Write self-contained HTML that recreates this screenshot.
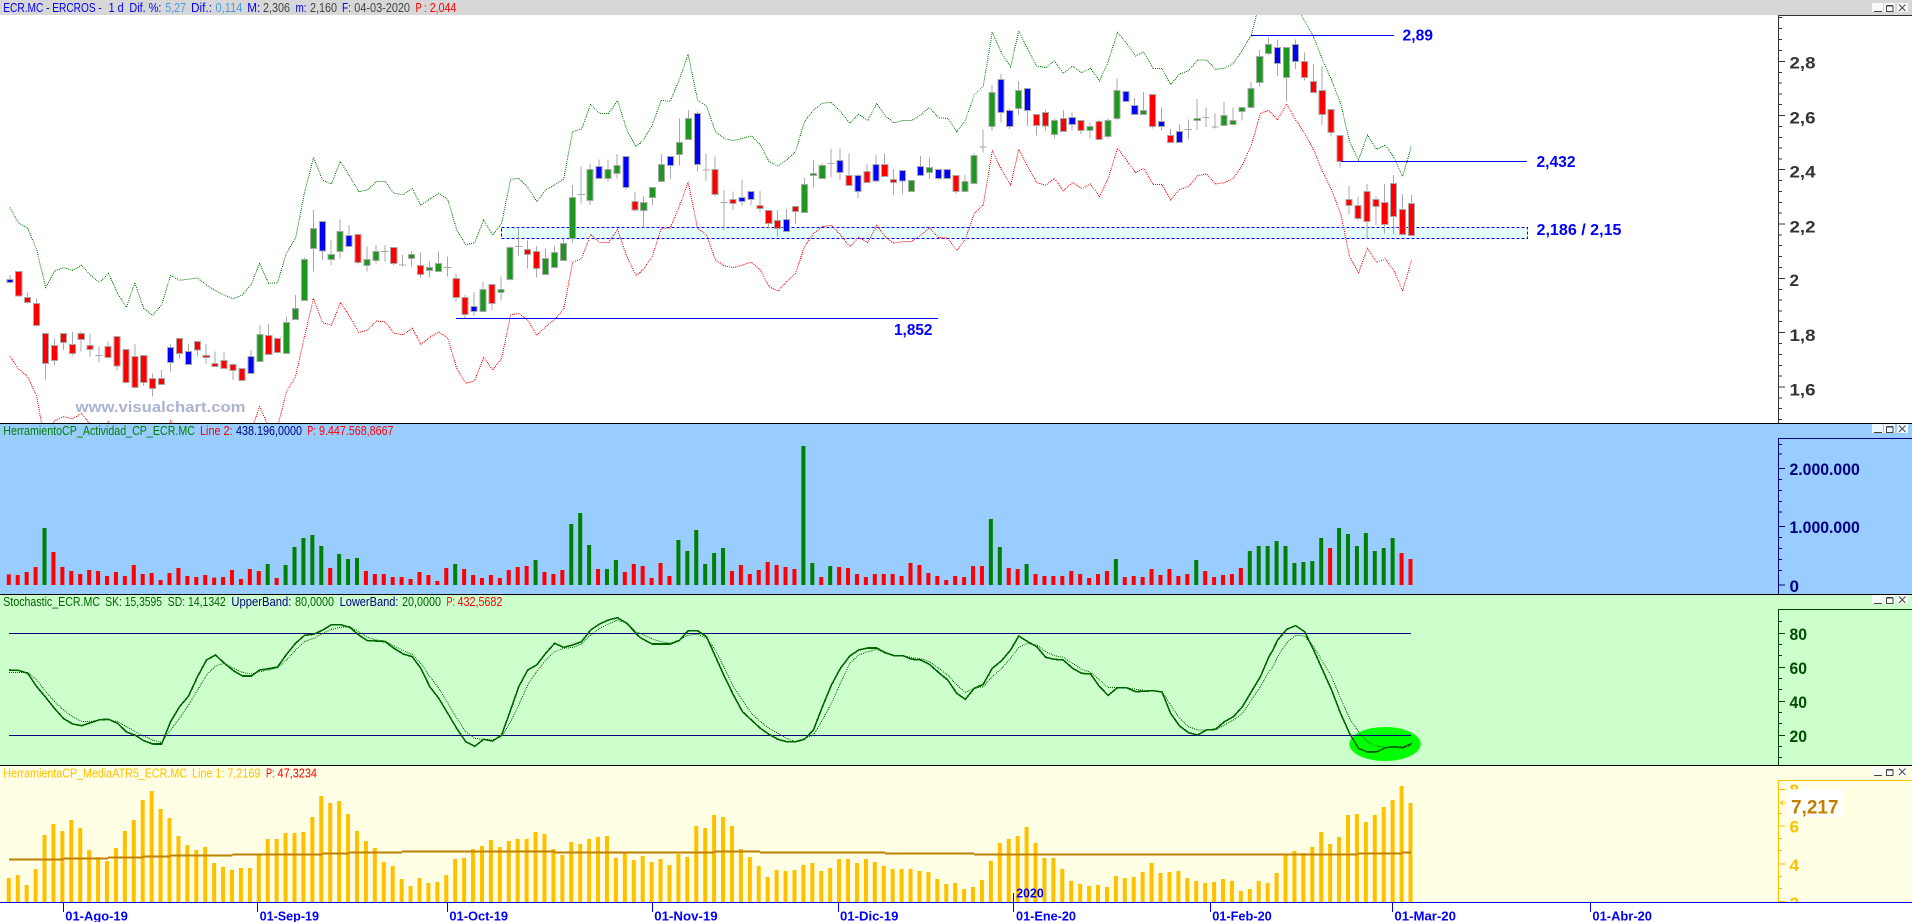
<!DOCTYPE html>
<html><head><meta charset="utf-8"><title>ECR.MC - ERCROS</title>
<style>
html,body{margin:0;padding:0;background:#fff;overflow:hidden}
svg{display:block}
text{font-family:"Liberation Sans",sans-serif}
.v{vector-effect:non-scaling-stroke;fill:none}
.c{shape-rendering:crispEdges}
.b{font-weight:bold}
.t{font-size:12.5px}
</style></head><body>
<svg width="1912" height="922" viewBox="0 0 1912 922" xmlns="http://www.w3.org/2000/svg">
<defs>
<g id="btn">
<rect x="0" y="0" width="11" height="9" fill="#fff" fill-opacity=".85"/>
<rect x="12" y="0" width="11" height="9" fill="#fff" fill-opacity=".85"/>
<rect x="25" y="0" width="11" height="9" fill="#fff" fill-opacity=".85"/>
<path d="M2 8.5h8" stroke="#444" fill="none" class="c"/>
<path d="M14.5 3h6.5v5.5h-6.5zM14.5 2.5h6.5" stroke="#444" fill="none" class="c"/>
<path d="M27 1.5l6.5 6.5M33.5 1.5l-6.5 6.5" stroke="#444" fill="none"/>
</g>
</defs>
<rect width="1912" height="922" fill="#fff"/>

<!-- support/resistance zone -->
<rect x="501.5" y="227.5" width="1026" height="11" fill="#e5fdfd" stroke="#0000ff" stroke-dasharray="3 2" class="c"/>

<!-- wicks -->
<g transform="translate(9.8 0) scale(8.928 .33333)" class="c"><path class="v" stroke="#a8a8a8" stroke-width="1" d="M0 825V850M2 877V910M3 895V980M4 1000V1138M5 1015V1095M6 1000V1050M7 996V1067M8 996V1055M9 1000V1070M10 1040V1088M11 1025V1075M12 1010V1112M13 1048V1150M14 1032V1165M15 1066V1157M16 1120V1190M17 1110V1155M18 1033V1115M19 1015V1075M20 1030V1095M21 1024V1070M22 1032V1090M23 1055V1100M24 1058V1105M25 1090V1140M26 1105V1141M27 1050V1120M28 975V1085M29 972V1065M30 1015V1060M31 950V1060M32 885V960M33 772V902M34 630V815M35 664V782M36 720V795M37 658V775M38 675V740M39 703V793M40 740V815M41 735V790M42 735V785M43 742V795M44 765V800M45 755V800M46 758V833M47 785V833M48 755V815M49 770V830M50 820V905M51 885V955M52 876V948M53 846V935M54 853V930M55 830V902M56 740V842M57 682V768M58 722V805M59 738V833M60 745V825M61 738V802M62 716V782M63 555V728M64 500V610M65 492V615M66 478V535M67 478V545M68 462V535M69 468V568M70 575V635M71 590V682M72 562V615M73 462V545M74 469V537M75 355V497M76 330V418M77 334V515M78 460V543M79 470V590M80 570V692M81 575V630M82 540V617M83 575V617M84 573V638M85 630V685M86 630V710M87 628V695M88 620V672M89 534V638M90 480V563M91 490V535M92 447V533M93 445V540M94 460V557M95 522V594M96 492V548M97 465V548M98 460V530M99 507V585M100 512V582M101 540V575M102 468V527M103 472V537M104 508V540M105 508V537M106 527V582M107 525V575M108 460V552M109 388V458M110 255V392M111 222V368M112 325V387M113 243V345M114 265V378M115 343V407M116 330V392M117 355V416M118 330V395M119 338V392M120 360V402M121 368V415M122 358V418M123 355V415M124 235V362M125 272V305M126 294V345M127 276V343M128 283V386M129 322V391M130 385V427M131 373V427M132 358V417M133 297V390M134 322V381M135 340V385M136 306V377M137 322V374M138 322V362M139 246V323M140 150V260M141 113V165M142 118V228M143 142V305M144 118V207M145 158V242M146 192V277M147 198V375M148 328V410M149 405V503M150 558V642M151 590V662M152 552V715M153 590V675M154 552V700M155 525V702M156 582V705M157 585V708"/>
<path class="v" stroke="#a8a8a8" stroke-width="1" d="M9.6 1067h.8M41.6 755h.8M43.6 795h.8M48.6 803h.8M56.6 739h.8M63.6 583h.8M77.6 510h.8M79.6 607h.8M91.6 491h.8M108.6 441h.8M131.6 388h.8M133.6 352h.8M134.6 381h.8"/>
</g>
<!-- bodies -->
<g transform="translate(6.8 0) scale(8.928 .33333)" class="c" stroke="#a8a8a8" stroke-width="1">
<path class="v" style="fill:#ff0000" d="M1 815h.68V888h-.68zM2 893h.68V907h-.68zM3 910h.68V976h-.68zM4 1000h.68V1090h-.68zM5 1037h.68V1081h-.68zM6 1000h.68V1027h-.68zM7 1033h.68V1060h-.68zM8 1000h.68V1018h-.68zM9 1036h.68V1048h-.68zM11 1040h.68V1072h-.68zM12 1010h.68V1098h-.68zM13 1048h.68V1147h-.68zM14 1070h.68V1162h-.68zM15 1067h.68V1147h-.68zM16 1135h.68V1165h-.68zM17 1135h.68V1153h-.68zM19 1015h.68V1060h-.68zM21 1024h.68V1050h-.68zM22 1066h.68V1073h-.68zM23 1090h.68V1099h-.68zM24 1081h.68V1105h-.68zM25 1093h.68V1111h-.68zM26 1106h.68V1141h-.68zM29 1006h.68V1063h-.68zM30 1015h.68V1057h-.68zM39 703h.68V787h-.68zM43 742h.68V790h-.68zM46 797h.68V823h-.68zM50 835h.68V892h-.68zM51 892h.68V943h-.68zM54 853h.68V910h-.68zM58 748h.68V764h-.68zM59 755h.68V805h-.68zM70 604h.68V630h-.68zM79 508h.68V583h-.68zM81 598h.68V610h-.68zM84 616h.68V626h-.68zM85 631h.68V670h-.68zM86 661h.68V686h-.68zM88 620h.68V634h-.68zM94 526h.68V556h-.68zM96 515h.68V547h-.68zM98 493h.68V529h-.68zM99 538h.68V547h-.68zM106 527h.68V574h-.68zM115 343h.68V376h-.68zM116 338h.68V378h-.68zM118 355h.68V394h-.68zM120 362h.68V391h-.68zM122 364h.68V418h-.68zM128 283h.68V379h-.68zM130 406h.68V427h-.68zM145 184h.68V232h-.68zM146 244h.68V277h-.68zM147 271h.68V343h-.68zM148 328h.68V397h-.68zM149 406h.68V484h-.68zM150 598h.68V616h-.68zM151 616h.68V655h-.68zM152 574h.68V664h-.68zM153 598h.68V619h-.68zM154 607h.68V673h-.68zM155 550h.68V649h-.68zM156 628h.68V703h-.68zM157 610h.68V706h-.68z"/>
<path class="v" style="fill:#1f961f" d="M28 1003h.68V1085h-.68zM31 968h.68V1060h-.68zM32 925h.68V958h-.68zM33 778h.68V902h-.68zM34 685h.68V745h-.68zM36 763h.68V778h-.68zM37 695h.68V754h-.68zM40 778h.68V796h-.68zM41 754h.68V781h-.68zM45 763h.68V775h-.68zM47 802h.68V811h-.68zM48 790h.68V814h-.68zM53 868h.68V934h-.68zM55 868h.68V878h-.68zM56 742h.68V838h-.68zM60 775h.68V823h-.68zM61 757h.68V802h-.68zM62 730h.68V782h-.68zM63 592h.68V716h-.68zM65 508h.68V601h-.68zM67 508h.68V535h-.68zM68 496h.68V520h-.68zM71 607h.68V631h-.68zM72 562h.68V592h-.68zM73 493h.68V544h-.68zM75 427h.68V463h-.68zM76 355h.68V418h-.68zM89 553h.68V637h-.68zM90 520h.68V527h-.68zM91 496h.68V535h-.68zM101 541h.68V574h-.68zM103 502h.68V517h-.68zM107 544h.68V574h-.68zM108 466h.68V550h-.68zM110 278h.68V380h-.68zM113 271h.68V325h-.68zM117 361h.68V403h-.68zM121 379h.68V391h-.68zM123 361h.68V409h-.68zM124 271h.68V355h-.68zM127 331h.68V343h-.68zM133 355h.68V361h-.68zM136 346h.68V376h-.68zM137 361h.68V373h-.68zM138 322h.68V334h-.68zM139 265h.68V322h-.68zM140 170h.68V247h-.68zM141 133h.68V160h-.68zM143 143h.68V232h-.68z"/>
<path class="v" style="fill:#0000ff" d="M0 838h.68V848h-.68zM18 1043h.68V1087h-.68zM20 1055h.68V1093h-.68zM27 1070h.68V1120h-.68zM35 664h.68V753h-.68zM38 707h.68V739h-.68zM52 919h.68V935h-.68zM66 500h.68V535h-.68zM69 469h.68V562h-.68zM74 469h.68V496h-.68zM77 340h.68V493h-.68zM82 593h.68V604h-.68zM83 575h.68V598h-.68zM87 658h.68V694h-.68zM93 482h.68V517h-.68zM95 526h.68V574h-.68zM97 493h.68V543h-.68zM100 512h.68V543h-.68zM102 500h.68V526h-.68zM104 508h.68V535h-.68zM105 508h.68V535h-.68zM111 238h.68V337h-.68zM112 331h.68V379h-.68zM114 265h.68V331h-.68zM119 353h.68V373h-.68zM125 274h.68V304h-.68zM126 316h.68V343h-.68zM129 364h.68V379h-.68zM131 394h.68V427h-.68zM142 143h.68V190h-.68zM144 134h.68V184h-.68z"/>
</g>

<!-- watermark -->
<text x="75.5" y="412" class="b" font-size="15" fill="#adb1d4" textLength="170" lengthAdjust="spacingAndGlyphs">www.visualchart.com</text>

<!-- upper / lower bands -->
<g stroke-width="1" stroke-dasharray="1 1" class="c">
<g transform="scale(.40816 .33333)">
<polyline class="v" stroke="#008000" points="24,622 45,668 68,685 90,750 112,863 134,813 156,803 178,811 200,796 222,826 244,848 266,820 288,880 310,922 330,848 352,925 374,946 396,915 418,826 440,841 484,834 506,855 528,872 550,886 572,896 594,885 616,852 636,790 658,850 680,848 702,758 724,715 746,578 768,472 790,540 812,552 834,484 857,530 879,575 900,570 922,545 944,545 965,580 988,584 1010,565 1031,616 1053,597 1075,580 1097,598 1119,690 1141,734 1163,728 1185,660 1207,705 1229,670 1251,538 1271,535 1293,562 1315,605 1337,570 1359,555 1381,537 1403,395 1425,387 1447,313 1469,340 1491,340 1513,302 1536,390 1558,440 1568,430"/>
<polyline class="v" stroke="#ff0000" points="24,1068 45,1107 68,1130 90,1190 102,1270 112,1310 134,1262 156,1250 178,1256 200,1240 222,1275 244,1296 266,1265 288,1330 310,1370 330,1296 352,1370 374,1390 396,1360 418,1262 440,1290 484,1285 506,1305 528,1322 550,1335 572,1345 594,1335 616,1290 636,1220 658,1280 680,1280 702,1175 724,1130 746,1010 768,895 790,968 812,976 834,907 857,950 879,997 900,990 922,963 944,966 965,1000 988,1004 1010,985 1031,1033 1053,1012 1075,996 1097,1015 1119,1105 1141,1150 1163,1142 1185,1072 1207,1110 1229,1075 1251,945 1271,940 1293,960 1315,1006 1337,980 1359,958 1381,928 1403,787 1425,776 1447,703 1469,728 1491,728 1513,688 1536,770 1558,826 1568,818"/>
</g>
<g transform="translate(640 0) scale(.40816 .33333)">
<polyline class="v" stroke="#008000" points="0,430 8,420 30,375 52,301 74,304 96,240 118,163 141,300 163,318 185,395 207,416 229,422 251,415 273,408 295,435 316,485 338,498 359,480 381,455 403,365 425,330 447,310 469,307 491,335 514,370 536,343 558,362 580,310 601,348 622,368 644,361 666,361 688,345 709,322 732,354 754,355 776,395 797,362 819,285 841,258 863,96 886,160 908,200 928,93 950,148 972,198 994,203 1015,183 1037,220 1060,198 1082,218 1104,205 1126,243 1147,185 1170,97 1192,130 1214,168 1234,156 1257,205 1279,205 1300,254 1322,222 1344,212 1366,180 1388,180 1410,208 1432,205 1454,190 1476,150 1498,105 1510,45 1520,0"/>
<polyline class="v" stroke="#ff0000" points="0,818 8,808 30,770 52,685 74,684 96,620 118,547 141,685 163,705 185,780 207,797 229,803 251,795 273,787 295,810 316,860 338,873 359,845 381,820 403,740 425,700 447,680 469,676 491,705 514,740 536,712 558,728 580,676 601,710 622,730 644,725 666,724 688,705 709,684 732,713 754,714 776,752 797,718 819,640 841,615 863,453 886,510 908,555 928,448 950,500 972,548 994,556 1015,535 1037,572 1060,547 1082,566 1104,552 1126,590 1147,535 1170,445 1192,480 1214,518 1234,505 1257,553 1279,553 1300,600 1322,568 1344,560 1366,527 1388,522 1410,552 1432,548 1454,535 1476,495 1498,435 1520,340 1541,331 1562,360"/>
</g>
<g transform="translate(1272 0) scale(.40816 .33333)">
<polyline class="v" stroke="#008000" points="50,0 72,45 100,105 124,180 146,240 168,310 190,425 212,480 234,405 256,448 278,435 300,475 320,530 342,436"/>
<polyline class="v" stroke="#ff0000" points="14,358 36,312 58,360 80,400 102,450 124,515 146,570 168,640 190,770 212,818 234,745 256,787 278,777 300,815 320,873 342,780"/>
</g>
</g>

<!-- price horizontals -->
<path d="M1251 35.5H1394M1341 161.5H1527M456 318.5H938" stroke="#0000ff" fill="none" class="c"/>
<g class="b" fill="#0000ff" font-size="15.5">
<text x="1402.5" y="40.5" textLength="30.5" lengthAdjust="spacingAndGlyphs">2,89</text>
<text x="1536.5" y="167" textLength="39" lengthAdjust="spacingAndGlyphs">2,432</text>
<text x="1536.5" y="235" textLength="85" lengthAdjust="spacingAndGlyphs">2,186 / 2,15</text>
<text x="894" y="335" textLength="38.5" lengthAdjust="spacingAndGlyphs">1,852</text>
</g>

<!-- title bar -->
<rect x="0" y="0" width="1912" height="15" fill="#d7d7d7"/>
<g class="t">
<text x="3.3" y="12" fill="#0000ff" textLength="98.5" lengthAdjust="spacingAndGlyphs">ECR.MC - ERCROS -</text>
<text x="108.6" y="12" fill="#0000ff" textLength="15" lengthAdjust="spacingAndGlyphs">1 d</text>
<text x="129.4" y="12" fill="#0000ff" textLength="32" lengthAdjust="spacingAndGlyphs">Dif. %:</text>
<text x="165.3" y="12" fill="#4a9be6" textLength="20.7" lengthAdjust="spacingAndGlyphs">5,27</text>
<text x="191" y="12" fill="#0000ff" textLength="21" lengthAdjust="spacingAndGlyphs">Dif.:</text>
<text x="215.5" y="12" fill="#4a9be6" textLength="27" lengthAdjust="spacingAndGlyphs">0,114</text>
<text x="247.3" y="12" fill="#0000ff" textLength="13" lengthAdjust="spacingAndGlyphs">M:</text>
<text x="263" y="12" fill="#444" textLength="27" lengthAdjust="spacingAndGlyphs">2,306</text>
<text x="295.5" y="12" fill="#0000ff" textLength="11" lengthAdjust="spacingAndGlyphs">m:</text>
<text x="310" y="12" fill="#444" textLength="27" lengthAdjust="spacingAndGlyphs">2,160</text>
<text x="342" y="12" fill="#0000ff" textLength="9" lengthAdjust="spacingAndGlyphs">F:</text>
<text x="354.3" y="12" fill="#444" textLength="55.7" lengthAdjust="spacingAndGlyphs">04-03-2020</text>
<text x="415.5" y="12" fill="#ff0000" textLength="11" lengthAdjust="spacingAndGlyphs">P :</text>
<text x="429.8" y="12" fill="#ff0000" textLength="26.5" lengthAdjust="spacingAndGlyphs">2,044</text>
</g>
<use href="#btn" x="1872" y="3"/>

<!-- price axis -->
<path d="M1778.5 15V423M1778 15.5H1912" stroke="#333" fill="none" class="c"/>
<g transform="translate(1778 0) scale(1 .33333)" class="c" stroke="#333">
<path class="v" d="M0 52h4M0 85h4M0 118h4M0 151h4M0 217h4M0 249h4M0 282h4M0 314h4M0 379h4M0 412h4M0 444h4M0 477h4M0 542h4M0 574h4M0 607h4M0 639h4M0 705h4M0 737h4M0 770h4M0 802h4M0 868h4M0 900h4M0 933h4M0 965h4M0 1031h4M0 1063h4M0 1096h4M0 1128h4M0 1194h4M0 1226h4M0 1259h4"/>
<path class="v" d="M0 184h7M0 347h7M0 509h7M0 672h7M0 835h7M0 998h7M0 1161h7"/>
</g>
<g class="b" fill="#333" font-size="17">
<text x="1789.5" y="68.7" textLength="26" lengthAdjust="spacingAndGlyphs">2,8</text>
<text x="1789.5" y="123.7" textLength="26" lengthAdjust="spacingAndGlyphs">2,6</text>
<text x="1789.5" y="177.7" textLength="26" lengthAdjust="spacingAndGlyphs">2,4</text>
<text x="1789.5" y="232.3" textLength="26" lengthAdjust="spacingAndGlyphs">2,2</text>
<text x="1789.5" y="286">2</text>
<text x="1789.5" y="341" textLength="26" lengthAdjust="spacingAndGlyphs">1,8</text>
<text x="1789.5" y="395.3" textLength="26" lengthAdjust="spacingAndGlyphs">1,6</text>
</g>

<!-- volume pane -->
<rect x="0" y="423" width="1912" height="171" fill="#99ccff"/>
<path d="M0 423.5H1912" stroke="#000" class="c"/>
<g transform="translate(8.8 420) scale(8.928 .33333)" stroke-width=".448" fill="none" class="c">
<path stroke="#ff0000" d="M0 495V463M1 495V465M2 495V456M3 495V441M5 495V396M6 495V441M7 495V453M8 495V462M9 495V450M10 495V453M11 495V468M12 495V456M13 495V468M14 495V435M15 495V462M16 495V459M17 495V480M18 495V459M19 495V444M20 495V468M21 495V471M22 495V465M23 495V473M24 495V471M25 495V450M26 495V477M27 495V447M28 495V453M30 495V474M36 495V444M40 495V453M41 495V462M42 495V462M43 495V471M44 495V471M45 495V477M46 495V456M47 495V465M48 495V483M49 495V444M51 495V447M52 495V465M53 495V474M54 495V465M55 495V474M56 495V450M57 495V441M58 495V438M60 495V456M61 495V462M62 495V450M66 495V447M69 495V456M70 495V432M71 495V438M72 495V474M73 495V429M74 495V468M81 495V453M82 495V435M83 495V462M84 495V450M85 495V426M86 495V435M87 495V441M88 495V447M91 495V471M93 495V441M94 495V444M95 495V462M96 495V471M97 495V462M98 495V462M99 495V462M100 495V468M101 495V429M102 495V435M103 495V459M104 495V468M105 495V480M106 495V468M107 495V471M108 495V438M109 495V438M112 495V444M113 495V447M115 495V462M116 495V468M117 495V468M118 495V468M119 495V453M120 495V462M121 495V474M122 495V462M123 495V453M125 495V471M126 495V468M127 495V471M128 495V447M129 495V465M130 495V447M131 495V468M132 495V462M134 495V453M135 495V471M136 495V465M137 495V462M138 495V444M148 495V384M156 495V399M157 495V417"/>
<path stroke="#008000" d="M4 495V324M29 495V432M31 495V435M32 495V381M33 495V354M34 495V345M35 495V378M37 495V402M38 495V417M39 495V414M50 495V432M59 495V420M63 495V312M64 495V279M65 495V375M67 495V447M68 495V420M75 495V360M76 495V393M77 495V330M78 495V432M79 495V399M80 495V384M89 495V78M90 495V429M92 495V438M110 495V297M111 495V381M114 495V432M124 495V417M133 495V420M139 495V393M140 495V378M141 495V378M142 495V363M143 495V378M144 495V429M145 495V426M146 495V423M147 495V354M149 495V324M150 495V342M151 495V378M152 495V339M153 495V393M154 495V384M155 495V354"/>
</g>
<g class="t">
<text x="3.3" y="435" fill="#008000" textLength="191.7" lengthAdjust="spacingAndGlyphs">HerramientoCP_Actividad_CP_ECR.MC</text>
<text x="200" y="435" fill="#ff0000" textLength="32.6" lengthAdjust="spacingAndGlyphs">Line 2:</text>
<text x="236" y="435" fill="#000080" textLength="66" lengthAdjust="spacingAndGlyphs">438.196,0000</text>
<text x="307.3" y="435" fill="#ff0000" textLength="8.5" lengthAdjust="spacingAndGlyphs">P:</text>
<text x="319" y="435" fill="#ff0000" textLength="74.5" lengthAdjust="spacingAndGlyphs">9.447.568,8667</text>
</g>
<use href="#btn" x="1872" y="424"/>
<path d="M1778.5 438V594M1778 438.5H1912" stroke="#000080" fill="none" class="c"/>
<g transform="translate(1778 420) scale(1 .33333)" class="c" stroke="#000080">
<path class="v" d="M0 73h4M0 102h4M0 178h4M0 211h4M0 244h4M0 276h4M0 352h4M0 385h4M0 418h4M0 451h4"/>
<path class="v" d="M0 145h7M0 320h7M0 495h7"/>
</g>
<g class="b" fill="#000080" font-size="17">
<text x="1789.5" y="475" textLength="70.3" lengthAdjust="spacingAndGlyphs">2.000.000</text>
<text x="1789.5" y="533" textLength="70.3" lengthAdjust="spacingAndGlyphs">1.000.000</text>
<text x="1789.5" y="592">0</text>
</g>

<!-- stochastic pane -->
<rect x="0" y="594" width="1912" height="171" fill="#ccffcc"/>
<path d="M0 594.5H1912" stroke="#000" class="c"/>
<ellipse cx="1385" cy="744" rx="35.7" ry="17" fill="#00ff00"/>
<path d="M9 633.5H1411M9 735.5H1411" stroke="#000080" fill="none" class="c"/>
<g fill="none" stroke="#006400" class="c">
<g transform="translate(0 420) scale(.40816 .33333)">
<polyline class="v" stroke-width="1" stroke-dasharray="1 1" points="22,757 45,757 68,757 90,780 112,815 134,845 156,870 178,890 200,905 222,905 244,900 266,900 288,905 310,920 332,935 352,948 374,960 396,968 418,930 440,895 462,855 484,810 506,765 528,738 550,730 572,745 594,757 616,762 636,755 658,750 680,743 702,720 724,690 746,665 768,655 791,640 812,628 834,622 857,620 879,635 900,652 922,660 944,663 965,678 988,692 1010,703 1031,730 1053,770 1075,805 1097,848 1119,895 1141,935 1163,955 1185,958 1207,960 1229,950 1251,905 1271,855 1293,795 1315,755 1337,720 1359,695 1381,685 1403,682 1425,672 1447,645 1469,625 1491,612 1513,600 1536,610 1558,635 1568,640"/>
<polyline class="v" stroke-width="1.6" points="22,750 45,751 68,760 90,800 112,832 134,866 156,896 178,912 200,917 222,908 244,899 266,898 288,910 310,936 332,946 352,962 374,972 396,972 418,905 440,860 462,828 484,770 506,720 528,705 550,730 572,752 594,768 616,768 636,750 658,746 680,741 702,703 724,670 746,646 768,643 791,630 812,614 834,614 857,622 879,645 900,662 922,663 944,665 965,685 988,702 1010,710 1031,745 1053,800 1075,835 1097,880 1119,925 1141,965 1163,979 1185,958 1207,963 1229,945 1251,870 1271,800 1293,750 1315,735 1337,700 1359,670 1381,682 1403,675 1425,665 1447,630 1469,612 1491,600 1513,593 1536,610 1558,640 1568,652"/>
</g>
<g transform="translate(640 420) scale(.40816 .33333)">
<polyline class="v" stroke-width="1" stroke-dasharray="1 1" points="0,640 30,657 52,665 74,670 96,660 118,645 141,643 163,655 185,690 207,745 229,800 251,840 273,880 295,905 316,925 338,940 359,955 381,965 403,955 425,945 447,900 469,850 491,790 514,730 536,705 558,695 580,688 601,700 622,707 644,707 666,713 688,716 709,725 732,745 754,765 776,795 797,817 819,805 841,800 863,770 886,745 908,715 928,682 950,670 972,675 994,695 1015,707 1037,712 1060,730 1082,748 1104,757 1126,780 1147,803 1170,803 1192,803 1214,808 1234,811 1257,812 1279,815 1300,855 1322,895 1344,920 1366,930 1388,930 1410,930 1432,915 1454,900 1476,880 1498,840 1520,800 1541,755 1548,745"/>
<polyline class="v" stroke-width="1.6" points="0,652 8,658 30,672 52,672 74,672 96,662 118,632 141,632 163,650 185,710 207,770 229,825 251,875 273,900 295,925 316,943 338,958 359,965 381,965 403,958 425,930 447,860 469,795 491,745 514,708 536,690 558,684 580,684 601,698 622,707 644,707 666,718 688,720 709,733 732,758 754,780 776,820 797,838 819,805 841,793 863,745 886,722 908,690 928,648 950,665 972,680 994,712 1015,718 1037,720 1060,745 1082,760 1104,762 1126,800 1147,826 1170,803 1192,803 1214,815 1234,814 1257,812 1279,816 1300,880 1322,918 1344,938 1366,945 1388,930 1410,928 1432,905 1454,890 1476,860 1498,815 1520,770 1541,710 1548,695"/>
</g>
<g transform="translate(1272 420) scale(.40816 .33333)">
<polyline class="v" stroke-width="1" stroke-dasharray="1 1" points="0,745 14,710 36,668 58,646 80,648 102,680 124,725 146,770 168,835 190,895 212,935 234,965 256,978 278,982 300,982 320,985 342,975"/>
<polyline class="v" stroke-width="1.6" points="0,695 14,660 36,628 58,617 80,635 102,690 124,750 146,810 168,880 190,940 212,985 234,996 256,996 278,983 300,980 320,983 342,970"/>
</g>
</g>
<g class="t">
<text x="3.3" y="606" fill="#006400" textLength="96.7" lengthAdjust="spacingAndGlyphs">Stochastic_ECR.MC</text>
<text x="105.3" y="606" fill="#006400" textLength="56.7" lengthAdjust="spacingAndGlyphs">SK: 15,3595</text>
<text x="167.8" y="606" fill="#006400" textLength="57.9" lengthAdjust="spacingAndGlyphs">SD: 14,1342</text>
<text x="231.4" y="606" fill="#000080" textLength="60" lengthAdjust="spacingAndGlyphs">UpperBand:</text>
<text x="295" y="606" fill="#006400" textLength="39" lengthAdjust="spacingAndGlyphs">80,0000</text>
<text x="339.6" y="606" fill="#000080" textLength="58.8" lengthAdjust="spacingAndGlyphs">LowerBand:</text>
<text x="402" y="606" fill="#006400" textLength="39" lengthAdjust="spacingAndGlyphs">20,0000</text>
<text x="446.5" y="606" fill="#ff0000" textLength="8.5" lengthAdjust="spacingAndGlyphs">P:</text>
<text x="457.5" y="606" fill="#ff0000" textLength="44.9" lengthAdjust="spacingAndGlyphs">432,5682</text>
</g>
<use href="#btn" x="1872" y="595"/>
<path d="M1778.5 609V765M1778 609.5H1912" stroke="#004000" fill="none" class="c"/>
<g transform="translate(1778 420) scale(1 .33333)" class="c" stroke="#004000">
<path class="v" d="M0 604h4M0 673h4M0 706h4M0 775h4M0 808h4M0 878h4M0 911h4M0 980h4M0 1013h4"/>
<path class="v" d="M0 640h7M0 743h7M0 845h7M0 947h7"/>
</g>
<g class="b" fill="#004d00" font-size="17">
<text x="1789.5" y="640" textLength="17.5" lengthAdjust="spacingAndGlyphs">80</text>
<text x="1789.5" y="674" textLength="17.5" lengthAdjust="spacingAndGlyphs">60</text>
<text x="1789.5" y="708" textLength="17.5" lengthAdjust="spacingAndGlyphs">40</text>
<text x="1789.5" y="742" textLength="17.5" lengthAdjust="spacingAndGlyphs">20</text>
</g>

<!-- ATR pane -->
<rect x="0" y="765" width="1912" height="137" fill="#ffffe6"/>
<path d="M0 765.5H1912" stroke="#000" class="c"/>
<g transform="translate(8.8 760) scale(8.928 .33333)" stroke-width=".448" fill="none" class="c">
<path stroke="#ffc000" d="M0 426V354M1 426V345M2 426V375M3 426V327M4 426V225M5 426V192M6 426V213M7 426V180M8 426V204M9 426V270M10 426V291M11 426V303M12 426V264M13 426V213M14 426V180M15 426V120M16 426V93M17 426V147M18 426V174M19 426V228M20 426V255M21 426V270M22 426V261M23 426V309M24 426V321M25 426V330M26 426V324M27 426V324M28 426V285M29 426V237M30 426V237M31 426V219M32 426V219M33 426V216M34 426V171M35 426V108M36 426V129M37 426V123M38 426V162M39 426V213M40 426V243M41 426V264M42 426V306M43 426V318M44 426V357M45 426V378M46 426V354M47 426V369M48 426V366M49 426V345M50 426V297M51 426V294M52 426V267M53 426V258M54 426V240M55 426V261M56 426V243M57 426V237M58 426V237M59 426V216M60 426V222M61 426V267M62 426V285M63 426V246M64 426V252M65 426V237M66 426V231M67 426V228M68 426V294M69 426V279M70 426V300M71 426V288M72 426V306M73 426V297M74 426V315M75 426V282M76 426V291M77 426V198M78 426V204M79 426V165M80 426V171M81 426V198M82 426V267M83 426V291M84 426V318M85 426V351M86 426V330M87 426V333M88 426V330M89 426V315M90 426V309M91 426V333M92 426V324M93 426V297M94 426V297M95 426V309M96 426V297M97 426V306M98 426V318M99 426V327M100 426V327M101 426V327M102 426V333M103 426V336M104 426V357M105 426V372M106 426V369M107 426V387M108 426V381M109 426V360M110 426V303M111 426V249M112 426V237M113 426V228M114 426V201M115 426V249M116 426V294M117 426V294M118 426V327M119 426V363M120 426V372M121 426V378M122 426V375M123 426V381M124 426V348M125 426V354M126 426V351M127 426V336M128 426V309M129 426V339M130 426V336M131 426V333M132 426V354M133 426V363M134 426V369M135 426V366M136 426V357M137 426V363M138 426V393M139 426V387M140 426V363M141 426V369M142 426V339M143 426V285M144 426V273M145 426V279M146 426V261M147 426V216M148 426V252M149 426V231M150 426V165M151 426V162M152 426V186M153 426V165M154 426V141M155 426V120M156 426V78M157 426V129"/>
</g>
<g fill="none" stroke="#bf8000" stroke-width="2" class="c">
<g transform="translate(0 760) scale(.40816 .33333)"><path class="v" d="M22 299H155M155 296H265M265 293H350M350 290H416M416 287H570M570 284H790M790 281H855M855 278H985M985 275H1358M1358 278H1568"/></g>
<g transform="translate(640 760) scale(.40816 .33333)"><path class="v" d="M0 278H183M183 275H294M294 278H600M600 281H818M818 284H1568"/></g>
<g transform="translate(1272 760) scale(.40816 .33333)"><path class="v" d="M0 284H210M210 281H318M318 278H341"/></g>
</g>
<g class="t">
<text x="3.3" y="777.3" fill="#ffc000" textLength="183.7" lengthAdjust="spacingAndGlyphs">HerramientaCP_MediaATR5_ECR.MC</text>
<text x="192" y="777.3" fill="#ffc000" textLength="68.4" lengthAdjust="spacingAndGlyphs">Line 1: 7,2169</text>
<text x="266" y="777.3" fill="#ff0000" textLength="8.5" lengthAdjust="spacingAndGlyphs">P:</text>
<text x="277.5" y="777.3" fill="#ff0000" textLength="39.5" lengthAdjust="spacingAndGlyphs">47,3234</text>
</g>
<use href="#btn" x="1872" y="767"/>
<path d="M1778.5 780V902M1778 780.5H1912" stroke="#ffc000" fill="none" class="c"/>
<g transform="translate(1778 760) scale(1 .33333)" class="c" stroke="#ffc000">
<path class="v" d="M0 160h4M0 235h4M0 271h4M0 349h4M0 385h4"/>
<path class="v" d="M0 88h7M0 198h7M0 312h7M0 425h7"/>
</g>
<g class="b" fill="#ffc000" font-size="17">
<text x="1789.5" y="796">8</text>
<text x="1789.5" y="832.7">6</text>
<text x="1789.5" y="871">4</text>
<text x="1789.5" y="909">2</text>
</g>
<rect x="1788.3" y="789.3" width="54.3" height="28" fill="#fff"/>
<text x="1791" y="813.3" class="b" font-size="19" fill="#bf8000" textLength="47.5" lengthAdjust="spacingAndGlyphs">7,217</text>
<path d="M1786 802.7H1780.5M1783 800.5L1780.5 802.7L1783 805" stroke="#ffc000" fill="none"/>

<!-- date axis -->
<rect x="0" y="902" width="1912" height="20" fill="#fff"/>
<path d="M0 902.5H1912" stroke="#0000ff" class="c"/>
<path d="M63.5 902V912M257.5 902V912M447.5 902V912M652.5 902V912M838.5 902V912M1013.5 893V912M1210.5 902V912M1392.5 902V912M1590.5 902V912" stroke="#0000ff" fill="none" class="c"/>
<g class="b" fill="#0000ff" font-size="13">
<text x="1016.3" y="897.7" textLength="27.4" lengthAdjust="spacingAndGlyphs">2020</text>
<text x="65.3" y="920.7" textLength="62.5" lengthAdjust="spacingAndGlyphs">01-Ago-19</text>
<text x="259.6" y="920.7" textLength="59.4" lengthAdjust="spacingAndGlyphs">01-Sep-19</text>
<text x="449.4" y="920.7" textLength="58.6" lengthAdjust="spacingAndGlyphs">01-Oct-19</text>
<text x="654.3" y="920.7" textLength="63.3" lengthAdjust="spacingAndGlyphs">01-Nov-19</text>
<text x="840" y="920.7" textLength="58.4" lengthAdjust="spacingAndGlyphs">01-Dic-19</text>
<text x="1016" y="920.7" textLength="60" lengthAdjust="spacingAndGlyphs">01-Ene-20</text>
<text x="1212.2" y="920.7" textLength="59.6" lengthAdjust="spacingAndGlyphs">01-Feb-20</text>
<text x="1394.4" y="920.7" textLength="61.6" lengthAdjust="spacingAndGlyphs">01-Mar-20</text>
<text x="1592.4" y="920.7" textLength="59.6" lengthAdjust="spacingAndGlyphs">01-Abr-20</text>
</g>
</svg>
</body></html>
